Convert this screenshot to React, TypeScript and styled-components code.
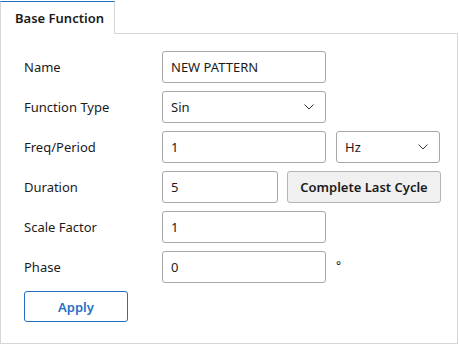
import React from 'react'
import styled, { createGlobalStyle } from 'styled-components'

const GlobalStyle = createGlobalStyle`
  html, body {
    margin: 0;
    padding: 0;
    background: #fff;
  }
  * {
    box-sizing: border-box;
  }
`

const Page = styled.div`
  width: 459px;
  height: 345px;
  font-family: "Segoe UI", "Noto Sans", "Open Sans", sans-serif;
  font-size: 13px;
  color: #1b1b1b;
  display: flex;
  flex-direction: column;
`

const TabBar = styled.div`
  display: flex;
  height: 34px;
  padding-top: 1px;
  padding-right: 1px;
`

const Tab = styled.div`
  width: 115px;
  border: 1px solid #d6d6d6;
  border-top: 1px solid #1f6fc8;
  border-bottom: none;
  display: flex;
  align-items: center;
  padding-left: 14px;
  font-weight: 600;
  background: #fff;
`

const TabFiller = styled.div`
  flex: 1;
  border-bottom: 1px solid #d6d6d6;
`

const Panel = styled.div`
  width: 458px;
  height: 310px;
  border: 1px solid #d6d6d6;
  border-top: none;
  padding: 17px 0 0 23px;
  display: flex;
  flex-direction: column;
  gap: 8px;
`

const Row = styled.div`
  display: flex;
  align-items: center;
  height: 32px;
`

const Label = styled.div`
  width: 138px;
  flex-shrink: 0;
`

const Controls = styled.div<{ gap: number }>`
  display: flex;
  align-items: center;
  gap: ${p => p.gap}px;
`

const Field = styled.div<{ w: number }>`
  width: ${p => p.w}px;
  height: 32px;
  border: 1px solid #a8a8a8;
  border-radius: 3px;
  display: flex;
  align-items: center;
  justify-content: space-between;
  padding: 0 11px 0 8px;
  background: #fff;
`

const Chevron = () => (
  <svg width="10" height="6" viewBox="0 0 10 6">
    <path d="M0.5 0.5 L5 5 L9.5 0.5" fill="none" stroke="#333" strokeWidth="1" />
  </svg>
)

const GreyButton = styled.div`
  width: 154px;
  height: 32px;
  border: 1px solid #b4b4b4;
  border-radius: 3px;
  background: #f0f0f0;
  display: flex;
  align-items: center;
  justify-content: center;
  font-weight: 600;
`

const Unit = styled.div`
  margin-top: -4px;
  font-size: 12px;
`

const ApplyButton = styled.div`
  width: 104px;
  height: 31px;
  border: 1px solid #1f6fc8;
  border-radius: 3px;
  color: #1f6fc8;
  font-weight: 600;
  display: flex;
  align-items: center;
  justify-content: center;
`

export default function App() {
  return (
    <Page>
      <GlobalStyle />
      <TabBar>
        <Tab>Base Function</Tab>
        <TabFiller />
      </TabBar>
      <Panel>
        <Row>
          <Label>Name</Label>
          <Field w={164}>NEW PATTERN</Field>
        </Row>
        <Row>
          <Label>Function Type</Label>
          <Field w={164}>Sin<Chevron /></Field>
        </Row>
        <Row>
          <Label>Freq/Period</Label>
          <Controls gap={10}>
            <Field w={164}>1</Field>
            <Field w={104}>Hz<Chevron /></Field>
          </Controls>
        </Row>
        <Row>
          <Label>Duration</Label>
          <Controls gap={9}>
            <Field w={116}>5</Field>
            <GreyButton>Complete Last Cycle</GreyButton>
          </Controls>
        </Row>
        <Row>
          <Label>Scale Factor</Label>
          <Field w={164}>1</Field>
        </Row>
        <Row>
          <Label>Phase</Label>
          <Controls gap={10}>
            <Field w={164}>0</Field>
            <Unit>°</Unit>
          </Controls>
        </Row>
        <ApplyButton>Apply</ApplyButton>
      </Panel>
    </Page>
  )
}
